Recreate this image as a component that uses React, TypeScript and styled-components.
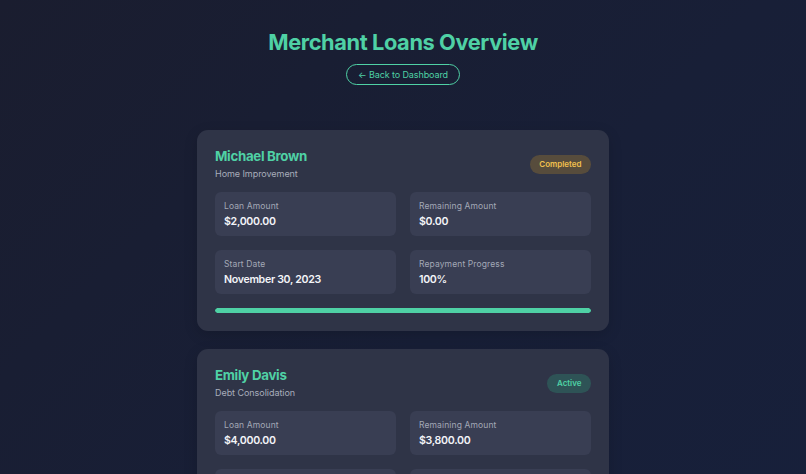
import React from "react";
import styled, { createGlobalStyle } from "styled-components";

const GlobalStyle = createGlobalStyle`
  html, body { margin: 0; padding: 0; }
  body {
    font-family: Inter, "Noto Sans", sans-serif;
    background: linear-gradient(135deg, #1a1d2f 0%, #181f37 55%, #17203b 100%);
    min-height: 100vh;
    color: #e6e8ef;
  }
`;

const Page = styled.div`
  display: flex;
  flex-direction: column;
  align-items: center;
  padding: 27px 0 40px;
`;

const Title = styled.h1`
  margin: 0;
  font-size: 21.8px;
  line-height: 30px;
  font-weight: 700;
  letter-spacing: -0.4px;
  color: #4fd1a5;
`;

const BackButton = styled.button`
  margin-top: 7px;
  font-family: inherit;
  font-size: 9px;
  letter-spacing: -0.1px;
  color: #4fd1a5;
  background: transparent;
  border: 1.5px solid #4fd1a5;
  border-radius: 999px;
  padding: 3.5px 11px;
  line-height: 12px;
  cursor: pointer;
`;

const List = styled.div`
  margin-top: 45px;
  width: 412px;
  display: flex;
  flex-direction: column;
  gap: 18px;
`;

const Card = styled.section`
  background: #2f3447;
  border-radius: 11px;
  padding: 18px;
  display: flex;
  flex-direction: column;
  box-shadow: 0 4px 14px rgba(0, 0, 0, 0.15);
`;

const Header = styled.div`
  display: flex;
  justify-content: space-between;
  align-items: center;
  margin-bottom: 12px;
`;

const Name = styled.h2`
  margin: 0;
  font-size: 13.3px;
  line-height: 17px;
  font-weight: 700;
  letter-spacing: -0.3px;
  color: #4fd1a5;
`;

const Purpose = styled.div`
  margin-top: 3px;
  font-size: 9px;
  line-height: 12px;
  letter-spacing: -0.05px;
  color: #a8adbb;
`;

const Badge = styled.span<{ $tone: "done" | "active" }>`
  font-size: 8px;
  font-weight: 600;
  line-height: 11px;
  padding: 4px 9.5px;
  border-radius: 999px;
  color: ${(p) => (p.$tone === "done" ? "#f2c14e" : "#4fd1a5")};
  background: ${(p) => (p.$tone === "done" ? "#574c3c" : "#2e5356")};
`;

const Grid = styled.div`
  display: grid;
  grid-template-columns: 1fr 1fr;
  gap: 14px;
`;

const Stat = styled.div`
  background: #393e53;
  border-radius: 6px;
  padding: 9px 9px 0;
  height: 44px;
  box-sizing: border-box;
  display: flex;
  flex-direction: column;
  gap: 3px;
`;

const Label = styled.div`
  font-size: 8.5px;
  line-height: 11px;
  letter-spacing: 0.12px;
  color: #a3a8b6;
`;

const Value = styled.div`
  font-size: 10.6px;
  line-height: 14px;
  font-weight: 600;
  letter-spacing: -0.3px;
  color: #f3f4f8;
`;

const Track = styled.div`
  margin-top: 14px;
  height: 5px;
  border-radius: 3px;
  background: #232838;
  overflow: hidden;
`;

const Fill = styled.div`
  height: 100%;
  background: #4fd1a5;
  border-radius: 3px;
`;

type Loan = {
  name: string;
  purpose: string;
  status: "Completed" | "Active";
  amount: string;
  remaining: string;
  start: string;
  progress: number;
};

const loans: Loan[] = [
  {
    name: "Michael Brown",
    purpose: "Home Improvement",
    status: "Completed",
    amount: "$2,000.00",
    remaining: "$0.00",
    start: "November 30, 2023",
    progress: 100,
  },
  {
    name: "Emily Davis",
    purpose: "Debt Consolidation",
    status: "Active",
    amount: "$4,000.00",
    remaining: "$3,800.00",
    start: "January 15, 2024",
    progress: 5,
  },
];

export default function App() {
  return (
    <>
      <GlobalStyle />
      <Page>
        <Title>Merchant Loans Overview</Title>
        <BackButton>← Back to Dashboard</BackButton>
        <List>
          {loans.map((l) => (
            <Card key={l.name}>
              <Header>
                <div>
                  <Name>{l.name}</Name>
                  <Purpose>{l.purpose}</Purpose>
                </div>
                <Badge $tone={l.status === "Completed" ? "done" : "active"}>{l.status}</Badge>
              </Header>
              <Grid>
                <Stat>
                  <Label>Loan Amount</Label>
                  <Value>{l.amount}</Value>
                </Stat>
                <Stat>
                  <Label>Remaining Amount</Label>
                  <Value>{l.remaining}</Value>
                </Stat>
                <Stat>
                  <Label>Start Date</Label>
                  <Value>{l.start}</Value>
                </Stat>
                <Stat>
                  <Label>Repayment Progress</Label>
                  <Value>{l.progress}%</Value>
                </Stat>
              </Grid>
              <Track>
                <Fill style={{ width: `${l.progress}%` }} />
              </Track>
            </Card>
          ))}
        </List>
      </Page>
    </>
  );
}
